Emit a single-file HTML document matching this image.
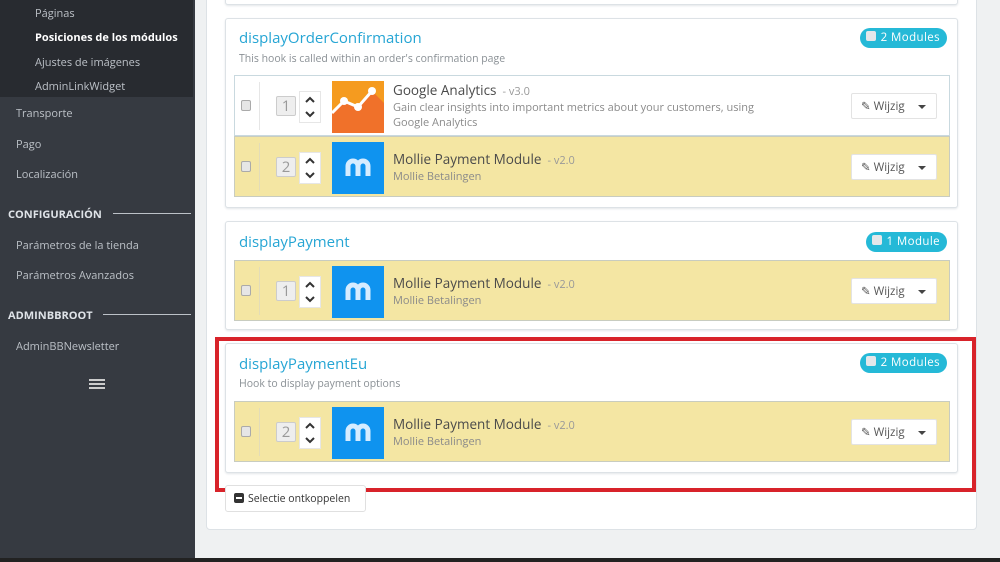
<!DOCTYPE html>
<html><head><meta charset="utf-8"><style>
*{box-sizing:border-box;margin:0;padding:0}
body{width:1000px;height:562px;overflow:hidden;background:#eff1f2;font-family:"Open Sans","Liberation Sans",sans-serif;position:relative}
.abs{position:absolute}
.side{left:0;top:0;width:195px;height:558px;background:#363a41}
.sidetop{left:0;top:0;width:193px;height:97px;background:#282b30}
.sl{position:absolute;font-size:11px;color:#bcc1c7}
.sh{position:absolute;font-size:11px;font-weight:bold;color:#dfe3e8}
.hr{position:absolute;height:1px;background:#bcc1c7}
.outer{left:206px;top:-10px;width:771px;height:540px;background:#fff;border:1px solid #dde2e6;border-radius:4px}
.panel{position:absolute;left:225px;width:733px;background:#fff;border:1px solid #dde2e6;border-radius:3px;box-shadow:0 1px 2px #e3e6e9}
.title{position:absolute;left:13px;font-size:15px;color:#25a5d4}
.desc{position:absolute;left:13px;font-size:10.5px;color:#8a9095}
.badge{position:absolute;right:10px;height:20px;background:#25b9d7;border-radius:10px;color:#fff;font-size:11.5px;padding:2px 7px 0 6px;letter-spacing:.4px}
.badge i{display:inline-block;width:10px;height:10px;background:#e4e7ea;border-radius:2px;margin-right:5px;vertical-align:-0px}
.row{position:absolute;left:8px;width:716px;height:61px;background:#f4e6a3;border:1px solid #c8ccc0}
.row.w{background:#fff;border-color:#c9d9df}
.cb{position:absolute;left:6px;top:24px;width:10px;height:11px;border:1px solid #aaa;border-radius:2px;background:#e6e6e6}
.sep{position:absolute;left:24px;top:6px;width:1px;height:48px;background:#e3dcb8}
.num{position:absolute;left:41px;top:20px;width:20px;height:20px;border:1px solid #ccc;border-radius:2px;background:#eee;color:#999;font-size:15px;text-align:center;line-height:18px}
.arr{position:absolute;left:64px;top:15px;width:22px;height:32px;background:#fff;border:1px solid #e6e6e6}
.logo{position:absolute;left:97px;top:5px;width:52px;height:52px;background:#0f93ef}
.mn{position:absolute;left:158px;font-size:13.5px;color:#4a4a4a}
.mn small{font-size:11px;color:#999;margin-left:6px}
.sub{position:absolute;left:158px;font-size:11px;color:#8a8a8a}
.btn{position:absolute;right:12px;top:17px;width:86px;height:26px;background:#fff;border:1px solid #e3e3e3;border-radius:2px;font-size:11.5px;color:#555;padding:5px 0 0 9px}
.btn b{position:absolute;right:10px;top:11px;border-left:4px solid transparent;border-right:4px solid transparent;border-top:4px solid #444}
</style></head><body>
<div class="abs side"></div><div class="abs sidetop"></div>
<div class="sl" style="left:35px;top:6px">Páginas</div>
<div class="sl" style="left:35px;top:30px;color:#fff;font-weight:bold">Posiciones de los módulos</div>
<div class="sl" style="left:35px;top:55px">Ajustes de imágenes</div>
<div class="sl" style="left:35px;top:79px">AdminLinkWidget</div>
<div class="sl" style="left:16px;top:106px">Transporte</div>
<div class="sl" style="left:16px;top:137px">Pago</div>
<div class="sl" style="left:16px;top:167px">Localización</div>
<div class="sh" style="left:8px;top:207px">CONFIGURACIÓN</div><div class="hr" style="left:113px;top:213px;width:78px"></div>
<div class="sl" style="left:16px;top:238px">Parámetros de la tienda</div>
<div class="sl" style="left:16px;top:268px">Parámetros Avanzados</div>
<div class="sh" style="left:8px;top:308px">ADMINBBROOT</div><div class="hr" style="left:103px;top:314px;width:88px"></div>
<div class="sl" style="left:16px;top:339px">AdminBBNewsletter</div>
<div class="abs" style="left:89px;top:379px;width:16px;height:2px;background:#ccc;box-shadow:0 4px 0 #ccc,0 8px 0 #ccc"></div>
<div class="abs" style="left:0;top:558px;width:1000px;height:4px;background:#222"></div>

<div class="abs outer"></div>
<div class="panel" style="top:-20px;height:25px"></div>

<div class="panel" style="top:18px;height:190px">
<div class="title" style="top:9px">displayOrderConfirmation</div>
<div class="desc" style="top:33px">This hook is called within an order's confirmation page</div>
<div class="badge" style="top:9px"><i></i>2 Modules</div>
<div class="row w" style="top:56px">
<div class="cb"></div><div class="sep" style="background:#e6e6e6"></div><div class="num">1</div>
<div class="arr"><svg width="20" height="30"><path d="M6 10l4-4 4 4M6 20l4 4 4-4" stroke="#333" stroke-width="2" fill="none"/></svg></div>
<div class="logo" style="background:#f0712a"><svg width="52" height="52"><path d="M0 0h52v22L40 10 26 26 12 20 0 32z" fill="#f59b1f"/><path d="M0 32L12 20 26 26 40 10" stroke="#fff" stroke-width="3" fill="none"/><circle cx="12" cy="20" r="4" fill="#fff"/><circle cx="26" cy="26" r="4" fill="#fff"/><circle cx="40" cy="10" r="4" fill="#fff"/></svg></div>
<div class="mn" style="top:5px">Google Analytics<small>- v3.0</small></div>
<div class="sub" style="top:24px">Gain clear insights into important metrics about your customers, using</div>
<div class="sub" style="top:39px">Google Analytics</div>
<div class="btn">✎ Wijzig<b></b></div>
</div>
<div class="row" style="top:117px">
<div class="cb"></div><div class="sep"></div><div class="num">2</div>
<div class="arr"><svg width="20" height="30"><path d="M6 10l4-4 4 4M6 20l4 4 4-4" stroke="#333" stroke-width="2" fill="none"/></svg></div>
<div class="logo"><svg width="52" height="52"><path d="M16 34V24a5 5 0 0 1 10 0v10M26 24a5 5 0 0 1 10 0v10" stroke="#d6ecff" stroke-width="5" fill="none"/></svg></div>
<div class="mn" style="top:13px">Mollie Payment Module<small>- v2.0</small></div>
<div class="sub" style="top:32px">Mollie Betalingen</div>
<div class="btn">✎ Wijzig<b></b></div>
</div></div>

<div class="panel" style="top:221px;height:109px">
<div class="title" style="top:10px">displayPayment</div>
<div class="badge" style="top:10px"><i></i>1 Module</div>
<div class="row" style="top:38px">
<div class="cb"></div><div class="sep"></div><div class="num">1</div>
<div class="arr"><svg width="20" height="30"><path d="M6 10l4-4 4 4M6 20l4 4 4-4" stroke="#333" stroke-width="2" fill="none"/></svg></div>
<div class="logo"><svg width="52" height="52"><path d="M16 34V24a5 5 0 0 1 10 0v10M26 24a5 5 0 0 1 10 0v10" stroke="#d6ecff" stroke-width="5" fill="none"/></svg></div>
<div class="mn" style="top:13px">Mollie Payment Module<small>- v2.0</small></div>
<div class="sub" style="top:32px">Mollie Betalingen</div>
<div class="btn">✎ Wijzig<b></b></div>
</div></div>

<div class="panel" style="top:343px;height:130px">
<div class="title" style="top:10px">displayPaymentEu</div>
<div class="desc" style="top:33px">Hook to display payment options</div>
<div class="badge" style="top:9px"><i></i>2 Modules</div>
<div class="row" style="top:57px">
<div class="cb"></div><div class="sep"></div><div class="num">2</div>
<div class="arr"><svg width="20" height="30"><path d="M6 10l4-4 4 4M6 20l4 4 4-4" stroke="#333" stroke-width="2" fill="none"/></svg></div>
<div class="logo"><svg width="52" height="52"><path d="M16 34V24a5 5 0 0 1 10 0v10M26 24a5 5 0 0 1 10 0v10" stroke="#d6ecff" stroke-width="5" fill="none"/></svg></div>
<div class="mn" style="top:13px">Mollie Payment Module<small>- v2.0</small></div>
<div class="sub" style="top:32px">Mollie Betalingen</div>
<div class="btn">✎ Wijzig<b></b></div>
</div></div>

<div class="abs" style="left:215px;top:337px;width:761px;height:155px;border:4px solid #d8232a"></div>
<div class="abs" style="left:225px;top:485px;width:141px;height:27px;background:#fff;border:1px solid #e0e0e0;border-radius:3px;font-size:10.5px;color:#333;padding:6px 0 0 8px"><span style="display:inline-block;width:10px;height:10px;background:#333;border-radius:2px;vertical-align:-1px;margin-right:4px;position:relative"><span style="position:absolute;left:2px;top:4px;width:6px;height:2px;background:#fff"></span></span>Selectie ontkoppelen</div>
</body></html>
